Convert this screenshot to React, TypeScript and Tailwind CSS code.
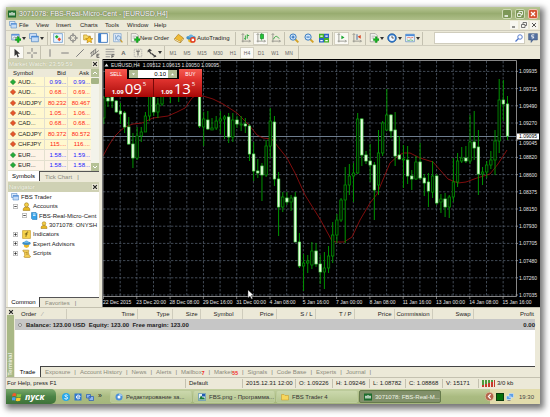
import React from "react";

// [index, high, bodyTop, bodyBottom, low, 1 = bearish (filled)]
const candles = [
  [0, 96, 98, 118, 124, 0],
  [1, 96, 98, 101, 107, 1],
  [2, 96, 97, 101, 108, 1],
  [3, 100, 101, 112, 113, 1],
  [4, 103, 111, 114, 124, 1],
  [5, 111, 113, 127, 133, 1],
  [6, 117, 127, 144, 145, 1],
  [7, 133, 144, 158, 168, 1],
  [8, 127, 136, 158, 160, 0],
  [9, 127, 132, 136, 142, 0],
  [10, 112, 116, 132, 132, 0],
  [11, 90, 94, 116, 121, 0],
  [12, 92, 94, 112, 116, 1],
  [13, 98, 104, 112, 118, 0],
  [14, 92, 95, 104, 106, 0],
  [16, 90, 92, 96, 103, 0],
  [18, 90, 92, 96, 102, 0],
  [23, 90, 92, 126, 128, 1],
  [24, 112, 119, 127, 146, 0],
  [25, 111, 120, 129, 130, 1],
  [26, 118, 128, 130, 130, 0],
  [27, 116, 121, 128, 130, 0],
  [28, 111, 119, 121, 134, 0],
  [29, 115, 117, 119, 139, 0],
  [30, 113, 117, 137, 143, 1],
  [31, 113, 120, 137, 142, 0],
  [32, 116, 120, 124, 128, 1],
  [33, 116, 124, 125, 131, 0],
  [34, 118, 124, 126, 133, 1],
  [35, 124, 126, 154, 161, 1],
  [36, 142, 154, 171, 181, 1],
  [37, 159, 171, 173, 178, 1],
  [38, 163, 166, 175, 201, 1],
  [39, 140, 146, 175, 177, 0],
  [40, 108, 121, 146, 158, 0],
  [41, 116, 122, 179, 186, 1],
  [42, 172, 179, 207, 236, 1],
  [43, 192, 197, 207, 212, 0],
  [44, 192, 198, 202, 205, 1],
  [45, 195, 198, 202, 211, 0],
  [46, 192, 197, 242, 242, 1],
  [47, 233, 242, 266, 268, 1],
  [48, 254, 263, 266, 291, 0],
  [49, 255, 261, 263, 273, 0],
  [50, 242, 251, 265, 269, 0],
  [51, 243, 251, 264, 267, 1],
  [52, 255, 264, 272, 284, 1],
  [53, 252, 268, 272, 289, 0],
  [54, 246, 256, 268, 273, 0],
  [55, 222, 235, 256, 263, 0],
  [56, 214, 220, 235, 243, 0],
  [57, 198, 200, 220, 222, 0],
  [58, 167, 185, 200, 243, 0],
  [59, 164, 176, 185, 195, 0],
  [60, 163, 173, 176, 202, 0],
  [61, 113, 119, 173, 174, 0],
  [62, 118, 119, 155, 166, 1],
  [63, 151, 155, 161, 164, 1],
  [64, 144, 161, 165, 182, 1],
  [65, 162, 165, 190, 220, 1],
  [66, 130, 153, 185, 195, 0],
  [67, 121, 123, 153, 156, 0],
  [68, 89, 115, 130, 131, 0],
  [69, 114, 115, 131, 138, 1],
  [70, 112, 130, 156, 166, 1],
  [71, 136, 155, 159, 160, 1],
  [72, 145, 159, 160, 188, 0],
  [73, 146, 160, 176, 184, 1],
  [74, 170, 176, 179, 190, 1],
  [75, 156, 162, 179, 180, 0],
  [76, 143, 162, 178, 180, 1],
  [77, 174, 178, 183, 196, 1],
  [78, 173, 182, 191, 207, 1],
  [79, 161, 176, 192, 198, 0],
  [80, 174, 176, 203, 205, 1],
  [81, 194, 199, 202, 213, 0],
  [82, 193, 199, 207, 217, 1],
  [83, 195, 197, 207, 218, 0],
  [84, 158, 182, 197, 202, 0],
  [85, 153, 161, 182, 187, 0],
  [86, 147, 158, 161, 163, 0],
  [87, 146, 158, 161, 163, 1],
  [88, 115, 142, 161, 164, 0],
  [89, 111, 142, 148, 160, 1],
  [90, 130, 147, 174, 195, 1],
  [91, 167, 172, 174, 185, 0],
  [92, 161, 165, 172, 178, 0],
  [93, 151, 160, 165, 169, 0],
  [94, 130, 141, 160, 175, 0],
  [95, 79, 100, 141, 153, 0],
  [96, 80, 100, 104, 121, 1],
  [97, 96, 104, 136, 140, 1],
];

const average =
  "103,156 109,145 115,136 120,131 125,127 133,124 142,123 153,118 168,116 177,112 185,108 192,98 197,95 203,96 213,99 223,104 237,113 249,125 257,135 263,138 272,139 279,148 287,158 295,173 300,184 305,195 320,219 332,241 336,242 344,242 352,237 360,220 370,203 377,194 382,182 390,163 398,156 403,153 410,153 420,158 433,162 448,179 458,183 466,182 477,178 490,174 498,164 507,150";

const prices = [
  "1.09935",
  "1.09715",
  "1.09490",
  "1.09270",
  "1.09045",
  "1.08820",
  "1.08600",
  "1.08375",
  "1.08150",
  "1.07930",
  "1.07705",
  "1.07480",
  "1.07260",
  "1.07035",
];

const times = [
  "22 Dec 2015",
  "23 Dec 20:00",
  "28 Dec 08:00",
  "29 Dec 16:00",
  "31 Dec 00:00",
  "4 Jan 08:00",
  "5 Jan 16:00",
  "7 Jan 00:00",
  "8 Jan 08:00",
  "11 Jan 16:00",
  "13 Jan 00:00",
  "14 Jan 08:00",
  "15 Jan 16:00",
];

const quotes = [
  ["AUD...", "0.99...", "0.99...", "up"],
  ["AUD...", "0.68...", "0.69...", "down"],
  ["AUDJPY", "80.232", "80.467", "down"],
  ["AUD...", "1.05...", "1.06...", "down"],
  ["CAD...", "0.68...", "0.68...", "down"],
  ["CADJPY", "80.372", "80.572", "down"],
  ["CHFJPY", "115....", "116....", "down"],
  ["EUR...", "1.58...", "1.59...", "up"],
  ["EUR...", "1.58...", "1.58...", "up"],
];

const Svg = ({ children, className = "size-[10px]" }: any) => (
  <svg viewBox="0 0 16 16" className={className + " shrink-0"} fill="none" aria-hidden="true">
    {children}
  </svg>
);

const Plus = () => (
  <path d="M10 6h3v3h3v3h-3v3h-3v-3H7V9h3z" fill="#12b71c" stroke="#0a7a12" strokeWidth=".6" />
);

const Axes = () => <path d="M3 1v14M1 13h14M1 3l2-2 2 2M13 11l2 2-2 2" stroke="#8c8c84" strokeWidth="1.3" />;

const Person = () => (
  <>
    <path d="M2 15c0-5 2-6 6-6s6 1 6 6z" fill="#e8b820" stroke="#9a7410" />
    <circle cx="8" cy="5" r="3.6" fill="#f4cf48" stroke="#9a7410" />
  </>
);

const Hat = () => (
  <>
    <path d="M3 9h10l-1 5-4 2-4-2z" fill="#e9b92c" />
    <ellipse cx="8" cy="7.5" rx="7.5" ry="3" fill="#3d8ec9" />
    <path d="M4 7c0-6 8-6 8 0z" fill="#67b2e4" />
  </>
);

const icons: Record<string, React.ReactNode> = {
  newChart: (
    <>
      <path d="M1 2h12v9H1z" fill="#e6eefb" stroke="#4a78b8" />
      <path d="M1 2h12v2H1z" fill="#4a86d8" />
      <path d="M3 9l3-3 2 2 3-3" stroke="#666" />
      <Plus />
    </>
  ),
  profiles: (
    <>
      <path d="M1 1h11v8H1z" fill="#dbe9fb" stroke="#3e78bd" />
      <path d="M4 5h11v9H4z" fill="#c5dcf7" stroke="#3e78bd" />
      <path d="M4 5h11v2H4z" fill="#3f83d5" />
    </>
  ),
  watch: (
    <>
      <path d="M1 1h14v14H1z" fill="#eaf3fd" stroke="#4584c8" />
      <path d="M3 6l3-3 3 3-3 3z" fill="#1fae38" />
      <path d="M7 10l3-3 3 3-3 3z" fill="#ea4a26" />
    </>
  ),
  target: (
    <>
      <circle cx="8" cy="8" r="5" stroke="#777" strokeWidth="1.4" />
      <path d="M8 0v6M8 10v6M0 8h6M10 8h6" stroke="#777" strokeWidth="1.4" />
    </>
  ),
  star: (
    <>
      <path d="M1 3h5l1 2h5v6H1z" fill="#f6d965" stroke="#ba8b18" />
      <path d="M10 5l1.8 3.6 4 .4-3 2.6 1 4-3.8-2-3.6 2 .8-4-3-2.6 4-.4z" fill="#ffc928" stroke="#b07c0c" />
    </>
  ),
  panel: (
    <>
      <path d="M1 1h14v14H1z" fill="#fff" stroke="#4079bd" strokeWidth="1.5" />
      <path d="M1 1h4v14H1z" fill="#3b7fd0" />
    </>
  ),
  tester: (
    <>
      <path d="M1 1h12v13H1z" fill="#e5eefa" stroke="#6c96c8" />
      <path d="M4 3v9M8 3v7" stroke="#6c96c8" />
      <circle cx="9" cy="8" r="3.5" fill="#cfe3f8" stroke="#4b7db6" />
      <path d="M11.5 10.5L15 15" stroke="#c99b2a" strokeWidth="2" />
    </>
  ),
  order: (
    <>
      <path d="M2 1h8l3 3v10H2z" fill="#fbfbf6" stroke="#888" />
      <path d="M4 5h6M4 8h4" stroke="#888" />
      <Plus />
    </>
  ),
  book: (
    <>
      <path d="M1 9l6-7 8 6-5 6z" fill="#f0bb35" stroke="#a77712" />
      <path d="M1 9v2l9 5v-2M10 16l5-6V8" fill="#fff4c8" stroke="#a77712" />
    </>
  ),
  auto: (
    <>
      <Hat />
      <circle cx="11" cy="11" r="4.5" fill="#e03a1e" />
      <path d="M9 9h4v4H9z" fill="#fff" />
    </>
  ),
  bars: (
    <>
      <Axes />
      <path d="M7 4v7M5 9h2M10 2v7M10 4h3" stroke="#23a535" strokeWidth="1.4" />
    </>
  ),
  candle: (
    <>
      <Axes />
      <path d="M9 0v12" stroke="#138c22" />
      <path d="M7 2h5v7H7z" fill="#20c536" stroke="#0e7d1b" />
    </>
  ),
  line: (
    <>
      <Axes />
      <path d="M4 10c3-7 6-5 9-1" stroke="#27a238" strokeWidth="1.4" />
    </>
  ),
  zoomIn: (
    <>
      <path d="M10 10l5 5" stroke="#d3a228" strokeWidth="3" />
      <circle cx="6.5" cy="6.5" r="5" fill="#cfe6fb" stroke="#3577bd" strokeWidth="1.5" />
      <path d="M4 6.5h5M6.5 4v5" stroke="#1e62b4" strokeWidth="1.5" />
    </>
  ),
  zoomOut: (
    <>
      <path d="M10 10l5 5" stroke="#d3a228" strokeWidth="3" />
      <circle cx="6.5" cy="6.5" r="5" fill="#cfe6fb" stroke="#3577bd" strokeWidth="1.5" />
      <path d="M4 6.5h5" stroke="#1e62b4" strokeWidth="1.5" />
    </>
  ),
  tile: (
    <>
      <path d="M0 1h8v7H0zM8 8h8v7H8z" fill="#43b02a" />
      <path d="M8 1h8v7H8zM0 8h8v7H0z" fill="#2d66c4" />
      <path d="M2 4h4v2H2zM10 4h4v2h-4zM2 11h4v2H2zM10 11h4v2h-4z" fill="#fff" />
    </>
  ),
  scroll: (
    <>
      <Axes />
      <path d="M7 4l5 3-5 3z" fill="#1ca632" />
    </>
  ),
  shift: (
    <>
      <Axes />
      <path d="M8 2v9" stroke="#3f6ca8" strokeWidth="1.5" />
      <path d="M14 3v6L9 6z" fill="#d84524" />
    </>
  ),
  clock: (
    <>
      <circle cx="8" cy="8" r="7" fill="#2e78cb" stroke="#1c5598" />
      <circle cx="8" cy="8" r="4.6" fill="#f2f8ff" />
      <path d="M8 4.5V8h3" stroke="#333" strokeWidth="1.2" />
    </>
  ),
  template: (
    <>
      <path d="M1 2h14v12H1z" fill="#f2f6fb" stroke="#4b7fbe" />
      <path d="M1 2h14v3H1z" fill="#4b8cd8" />
      <path d="M3 8l3-1 3 1 4-1" stroke="#d3452a" />
      <path d="M3 11l3 1 3-1 4 1" stroke="#2b9c3b" />
    </>
  ),
  cursor: <path d="M4 1v12l3-3 2 5 2-1-2-5h4z" fill="#333" />,
  cross: <path d="M8 0v6M8 10v6M0 8h6M10 8h6" stroke="#777" strokeWidth="1.5" />,
  vline: <path d="M8 2v12" stroke="#777" strokeWidth="1.5" />,
  hline: <path d="M2 8h12" stroke="#777" strokeWidth="1.5" />,
  trend: <path d="M2 14L14 2" stroke="#777" strokeWidth="1.5" />,
  channel: (
    <>
      <path d="M0 9l10-8M1 14L14 4M3 6v7M6 4v7M9 2v7" stroke="#666" strokeWidth="1.2" />
      <path d="M15 10h-4v5h4M11 12.5h3" stroke="#444" strokeWidth="1.2" />
    </>
  ),
  fibo: (
    <>
      <path d="M1 2h14M1 6h14M1 10h14M1 14h7" stroke="#888" strokeWidth="1.3" />
      <path d="M11 16v-5h4M11 13.5h3" stroke="#444" strokeWidth="1.2" />
    </>
  ),
  label: (
    <>
      <path d="M2 2h12v12H2z" stroke="#999" strokeDasharray="2 1" />
      <path d="M5 5h6M8 5v7" stroke="#555" strokeWidth="1.5" />
    </>
  ),
  arrows: (
    <>
      <path d="M1 4l3-3 4 3-3 1 3 4-2 1-3-4-2 1z" fill="#444" />
      <path d="M15 14l-5 1 1-2-4-3 1-2 5 4 1-1z" fill="#444" />
    </>
  ),
  mail: (
    <>
      <path d="M1 1h14v10H8l-3 4v-4H1z" fill="#55719f" stroke="#405a86" />
      <path d="M10 3H6v3h3v2H6" stroke="#fff" strokeWidth="1.3" />
    </>
  ),
  globe: (
    <>
      <circle cx="8" cy="8" r="7" fill="#4c90d8" />
      <circle cx="8" cy="8" r="3" fill="#fff" />
      <path d="M8 1c4 0 6 2 7 5H8" fill="#9cc7ef" />
    </>
  ),
  photo: (
    <>
      <path d="M1 1h14v14H1z" fill="#e7f2fa" stroke="#266ca1" />
      <path d="M2 13l4-8 4 5 2-2 2 5z" fill="#187b38" />
      <path d="M8 2h6v5H8z" fill="#225bb4" />
    </>
  ),
  folder: <path d="M1 3h5l2 2h7v9H1z" fill="#f7d65b" stroke="#c59524" />,
  terminal: (
    <>
      <path d="M0 1h16v14H0z" fill="#1d6c2d" />
      <path d="M3 11V6h2v5M7 11V5h2v6M11 11V6h2v5" stroke="#fff" strokeWidth="1.3" />
    </>
  ),
};

const Tool = ({ name, label, on, caret }: { name: string; label: string; on?: boolean; caret?: boolean }) => (
  <button
    type="button"
    aria-label={label}
    className={
      "flex h-[13px] items-center justify-center " +
      (caret ? "w-[18px] gap-px " : "w-[15px] ") +
      (on ? "border border-[#d3d0c0] bg-[#faf9f4]" : "")
    }
  >
    <Svg>{icons[name]}</Svg>
    {caret && (
      <svg viewBox="0 0 4 3" className="w-[4px]" aria-hidden="true">
        <path d="M0 0h4L2 3z" fill="#333" />
      </svg>
    )}
  </button>
);

const Sep = ({ tight }: { tight?: boolean }) => (
  <span className={"h-[13px] w-px shrink-0 bg-[#c4c1b0] " + (tight ? "mx-px" : "mx-[2px]")} />
);

const Bar = () => <span className="text-[#777]">|</span>;

const TitleBar = () => (
  <header className="flex h-[13px] items-center gap-[3px] bg-linear-to-b from-[#b9c795] via-[#98ac70] to-[#afbf89] pr-[2px] pl-[2px] text-white">
    <Svg className="size-[8px]">{icons.terminal}</Svg>
    <h1 className="flex-1 text-[7px] leading-[12px] [text-shadow:0_0_1px_#444]">3071078: FBS-Real-Micro-Cent - [EURUSD,H4]</h1>
    <button type="button" aria-label="Minimize" className="size-[10px] rounded-[2px] border border-[#d0dbb7] bg-[#7d9757]">
      <Svg className="size-[8px]"><path d="M3 12h7" stroke="#fff" strokeWidth="3" /></Svg>
    </button>
    <button type="button" aria-label="Restore" className="size-[10px] rounded-[2px] border border-[#d0dbb7] bg-[#7d9757]">
      <Svg className="size-[8px]"><path d="M6 7V3h7v6h-3M3 7h7v6H3z" stroke="#fff" strokeWidth="1.6" /></Svg>
    </button>
    <button type="button" aria-label="Close" className="size-[10px] rounded-[2px] border border-[#eec5b4] bg-[#d55332]">
      <Svg className="size-[8px]"><path d="M4 4l8 8M12 4l-8 8" stroke="#fff" strokeWidth="2.5" /></Svg>
    </button>
  </header>
);

const MenuBar = () => (
  <nav className="flex h-[10px] items-center pr-[2px] pl-[3px]">
    <Svg className="mr-[2px] size-[8px]">{icons.profiles}</Svg>
    <button type="button" className="w-[17px] text-left">File</button>
    <button type="button" className="w-[20px] text-left">View</button>
    <button type="button" className="w-[24px] text-left">Insert</button>
    <button type="button" className="w-[25px] text-left">Charts</button>
    <button type="button" className="w-[22px] text-left">Tools</button>
    <button type="button" className="w-[27px] text-left">Window</button>
    <button type="button">Help</button>
    <span className="flex-1" />
    <span className="flex gap-[2px]">
      <button type="button" aria-label="Minimize chart" className="bg-[#f7f6f0]">
        <Svg className="size-[8px]"><path d="M4 12h6" stroke="#555" strokeWidth="2.5" /></Svg>
      </button>
      <button type="button" aria-label="Restore chart" className="bg-[#f7f6f0]">
        <Svg className="size-[8px]"><path d="M6 7V3h7v6h-3M3 7h7v6H3z" stroke="#555" strokeWidth="1.6" /></Svg>
      </button>
      <button type="button" aria-label="Close chart" className="bg-[#f7f6f0]">
        <Svg className="size-[8px]"><path d="M4 4l8 8M12 4l-8 8" stroke="#555" strokeWidth="2" /></Svg>
      </button>
    </span>
  </nav>
);

const Toolbars = () => (
  <>
    <div className="flex h-[15px] items-center border-t border-[#d0cdbd] pl-[3px]">
      <Tool name="newChart" label="New chart" caret />
      <Tool name="profiles" label="Profiles" caret />
      <Sep />
      <Tool name="watch" label="Market Watch" on />
      <Tool name="target" label="Data Window" />
      <Tool name="star" label="Navigator" on />
      <Tool name="panel" label="Terminal" on />
      <Tool name="tester" label="Strategy Tester" />
      <Sep />
      <button type="button" className="flex w-[41px] items-center whitespace-nowrap">
        <Svg>{icons.order}</Svg>New Order
      </button>
      <Tool name="book" label="MetaEditor" />
      <button type="button" className="flex w-[47px] items-center gap-px whitespace-nowrap">
        <Svg>{icons.auto}</Svg>AutoTrading
      </button>
      <Sep />
      <Tool name="bars" label="Bar chart" />
      <Tool name="candle" label="Candlesticks" on />
      <Tool name="line" label="Line chart" />
      <Sep tight />
      <Tool name="zoomIn" label="Zoom in" />
      <Tool name="zoomOut" label="Zoom out" />
      <Tool name="tile" label="Tile windows" />
      <Sep tight />
      <Tool name="scroll" label="Auto scroll" on />
      <Tool name="shift" label="Chart shift" />
      <Sep tight />
      <Tool name="order" label="Indicators" caret />
      <Tool name="clock" label="Periods" caret />
      <Tool name="template" label="Templates" caret />
      <Sep tight />
      <span className="flex-1" />
      <label className="flex h-[12px] w-[91px] items-center border border-[#d0cdbd] bg-white pr-px">
        <input aria-label="Search" className="w-0 min-w-0 flex-1 outline-none" />
        <Svg className="size-[8px]">
          <circle cx="10" cy="6" r="4.5" stroke="#4c74c8" strokeWidth="1.8" />
          <path d="M7 9l-6 6" stroke="#4c74c8" strokeWidth="2.5" />
        </Svg>
      </label>
      <Tool name="mail" label="Chat" />
    </div>
    <div className="flex h-[14px] items-center border-t border-[#d0cdbd] pl-[3px] text-[#666]">
      <Tool name="cursor" label="Cursor" on />
      <Tool name="cross" label="Crosshair" />
      <Sep tight />
      <Tool name="vline" label="Vertical line" />
      <Tool name="hline" label="Horizontal line" />
      <Tool name="trend" label="Trendline" />
      <Tool name="channel" label="Channel" />
      <Tool name="fibo" label="Fibonacci" />
      <button type="button" className="w-[13px] font-bold">A</button>
      <Tool name="label" label="Text label" />
      <Tool name="arrows" label="Arrows" caret />
      <Sep tight />
      {["M1", "M5", "M15", "M30", "H1", "H4", "D1", "W1", "MN"].map((p) => (
        <button
          key={p}
          type="button"
          className={
            "h-[12px] text-[5px] " +
            (p.length > 2 ? "w-[16px] " : "w-[14px] ") +
            (p === "H4" ? "border border-[#d3d0c0] bg-[#faf9f4]" : "")
          }
        >
          {p}
        </button>
      ))}
      <Sep />
    </div>
  </>
);

const PaneTitle = ({ children }: any) => (
  <div className="flex h-[10px] items-center justify-between bg-[#cfd1b4] pr-px pl-px">
    <h2 className="text-[#f7f7ee] [text-shadow:0_0_1px_#a3a67f]">{children}</h2>
    <button type="button" aria-label="Close pane" className="bg-[#ece9d8]">
      <Svg className="size-[6px]"><path d="M3 3l10 10M13 3L3 13" stroke="#222" strokeWidth="3" /></Svg>
    </button>
  </div>
);

const PaneTabs = ({ first, second }: { first: string; second: string }) => (
  <div className="flex h-[10px] items-center border-t border-[#555] text-[#8b897c]">
    <button type="button" className="-mt-px h-[10px] w-[32px] border-r border-[#444] bg-white text-black">{first}</button>
    <button type="button" className="px-[5px]">{second}</button>
    <Bar />
  </div>
);

const MarketWatch = () => (
  <section className="bg-[#ece9d8]">
    <PaneTitle>Market Watch: 23:59:59</PaneTitle>
    <div className="flex bg-white">
      <table className="h-[102px] flex-1 table-fixed border-collapse">
        <thead>
          <tr className="bg-[#ece9d8]">
            <th className="w-[36px] pl-[5px] text-left font-normal">Symbol</th>
            <th className="pr-[2px] text-right font-normal">Bid</th>
            <th className="pr-[2px] text-right font-normal">Ask</th>
          </tr>
        </thead>
        <tbody>
          {quotes.map(([symbol, bid, ask, dir], i) => (
            <tr key={i} className={"border-b border-[#e3e0cf] " + (i < 7 ? "bg-[#fff8cf]" : "bg-[#fdf3e6]")}>
              <td className="border-r border-[#e3e0cf] p-0">
                <span className="flex items-center gap-[2px] pl-[2px]">
                  <Svg className="size-[6px]">
                    <path d="M8 1l7 7-7 7-7-7z" fill={dir === "up" ? "#23ad38" : "#e7562b"} stroke={dir === "up" ? "#127322" : "#a83211"} strokeWidth="1.5" />
                  </Svg>
                  {symbol}
                </span>
              </td>
              <td className={"border-r border-[#e3e0cf] p-0 pr-px text-right " + (dir === "up" ? "text-[#2020ff]" : "text-[#ff2010]")}>{bid}</td>
              <td className={"p-0 pr-px text-right " + (dir === "up" ? "text-[#2020ff]" : "text-[#ff2010]")}>{ask}</td>
            </tr>
          ))}
        </tbody>
      </table>
      <div className="flex w-[8px] flex-col items-center justify-between bg-[#f3f3ea]">
        <div className="w-full">
          <Svg className="h-[8px] w-full bg-[#b5c196]"><path d="M4 10l4-4 4 4" stroke="#fff" strokeWidth="2" /></Svg>
          <div className="mt-px h-[6px] rounded-[1px] bg-[#a5b485]" />
        </div>
        <Svg className="h-[8px] w-full bg-[#b5c196]"><path d="M4 6l4 4 4-4" stroke="#fff" strokeWidth="2" /></Svg>
      </div>
    </div>
    <PaneTabs first="Symbols" second="Tick Chart" />
  </section>
);

const Box = ({ open }: { open?: boolean }) => (
  <Svg className="mr-[2px] size-[5px]">
    <path d="M1 1h14v14H1z" fill="#fff" stroke="#888" strokeWidth="2" />
    <path d={open ? "M4 8h8" : "M4 8h8M8 4v8"} stroke="#222" strokeWidth="2.5" />
  </Svg>
);

const Navigator = () => (
  <section className="mt-px flex flex-1 flex-col bg-[#ece9d8]">
    <PaneTitle>Navigator</PaneTitle>
    <div className="flex-1 bg-white">
      <ul className="grid h-[66px] grid-rows-7 whitespace-nowrap [&>li]:flex [&>li]:items-center">
        <li className="gap-[2px] pl-[3px]"><Svg className="size-[8px]">{icons.profiles}</Svg>FBS Trader</li>
        <li className="gap-[2px] pl-[5px]"><Box open /><Svg className="size-[9px]"><Person /></Svg>Accounts</li>
        <li className="gap-px pl-[14px]">
          <Box open />
          <Svg className="size-[8px]"><path d="M3 1h9l2 2v12H5l-2-2z" fill="#39a3e8" stroke="#1669a8" /><path d="M6 4h5M6 7h5" stroke="#fff" strokeWidth="1.5" /></Svg>
          FBS-Real-Micro-Cent
        </li>
        <li className="gap-px pl-[32px]"><Svg className="size-[8px]"><Person /></Svg>3071078: ONYSH</li>
        <li className="gap-[2px] pl-[5px]">
          <Box />
          <Svg className="size-[9px]"><path d="M1 1h14v14H1z" fill="#f7d34d" stroke="#b98b16" /><path d="M11 4c-3-1-3 1-4 8M5 7h5" stroke="#4b3a0a" strokeWidth="1.3" /></Svg>
          Indicators
        </li>
        <li className="gap-[2px] pl-[5px]"><Box /><Svg className="size-[9px]"><Hat /></Svg>Expert Advisors</li>
        <li className="gap-[2px] pl-[5px]">
          <Box />
          <Svg className="size-[9px]"><path d="M2 2h9c2 0 2 3 0 3l2 7c3 0 3 3 0 3H5c-2 0-2-3 0-3L4 5C1 5 1 2 2 2z" fill="#f5cf57" stroke="#a97d15" /><path d="M6 6h4M7 9h4" stroke="#8a650d" /></Svg>
          Scripts
        </li>
      </ul>
    </div>
    <PaneTabs first="Common" second="Favorites" />
  </section>
);

const Chart = () => (
  <svg viewBox="102 59 438 248" className="block w-full bg-black" role="img" aria-label="EURUSD,H4" fontFamily="Liberation Sans, sans-serif" fontSize="5">
    <g stroke="#5b6878" strokeWidth="0.7" strokeDasharray="2.4 1.6">
      {prices.map((p, i) => (
        <path key={p} d={`M103 ${71.4 + i * 17.2}H516`} />
      ))}
      {Array.from({ length: 24 }, (_, i) => (
        <path key={i} d={`M${120.2 + i * 16.65} 61V296`} />
      ))}
    </g>
    <path d="M103 136.5H516" stroke="#6d7c8d" strokeWidth="1" />
    <polyline points={average} fill="none" stroke="#a01010" strokeWidth="0.8" />
    {candles.map(([i, high, top, bottom, low, down]) => {
      const x = 103.8 + i * 4.162;
      return (
        <g key={i}>
          <path d={`M${x} ${high}V${low}`} stroke="#009400" strokeWidth="1" />
          <rect
            x={x - 1.2}
            y={top}
            width={2.4}
            height={Math.max(bottom - top, 1)}
            fill={down ? "#e8ffe0" : "#001800"}
            stroke={down ? "#5fe05f" : "#009c00"}
            strokeWidth="0.7"
          />
        </g>
      );
    })}
    <path d="M103 60.5H516.5V296.5H103z" fill="none" stroke="#a8a8a8" strokeWidth="0.8" />
    <path d="M102.5 59V307" stroke="#777" strokeWidth="1" />
    <g fill="#e4e4e4">
      {prices.map((p, i) => (
        <React.Fragment key={p}>
          <path d={`M516 ${71.4 + i * 17.2}h2`} stroke="#a8a8a8" strokeWidth="0.7" />
          {/* the level next to the bid tag is pushed down so both stay readable */}
          <text x="519" y={p === "1.09045" ? 145 : 73.3 + i * 17.2}>{p}</text>
        </React.Fragment>
      ))}
      {times.map((t, i) => (
        <React.Fragment key={t}>
          <path d={`M${103.5 + i * 33.3} 296v3`} stroke="#a8a8a8" strokeWidth="0.7" />
          <text x={103 + i * 33.3} y="303.5">{t}</text>
        </React.Fragment>
      ))}
      <path d="M104.5 66.5h4l-2-3z" />
      <text x="111" y="67">EURUSD,H4&nbsp; 1.09512 1.09615 1.09050 1.09095</text>
    </g>
    <rect x="517" y="133.5" width="22" height="6" fill="#fff" />
    <text x="519" y="138.3" fill="#000">1.09095</text>
    <path d="M248 290v8l2-2 1.5 3 1.2-.6-1.5-3h2.6z" fill="#fff" stroke="#333" strokeWidth="0.4" />
  </svg>
);

const OneClick = () => (
  <div className="absolute top-[10px] left-[3px] flex w-[97px] flex-col text-white">
    <div className="flex h-[10px]">
      <button type="button" className="w-[22px] bg-linear-to-b from-[#f55a50] to-[#e23430] text-[5px]">SELL</button>
      <div className="flex flex-1 items-center bg-black px-[2px]">
        <button type="button" aria-label="Decrease volume" className="h-[8px] w-[9px] bg-[#b1bd94]">
          <Svg className="h-[6px] w-full"><path d="M4 6h8l-4 5z" fill="#fff" /></Svg>
        </button>
        <input aria-label="Volume" defaultValue="0.10" className="h-[8px] w-0 min-w-0 flex-1 bg-white pr-[2px] text-right text-black" />
        <button type="button" aria-label="Increase volume" className="h-[8px] w-[9px] bg-[#b1bd94]">
          <Svg className="h-[6px] w-full"><path d="M4 11h8L8 6z" fill="#fff" /></Svg>
        </button>
      </div>
      <button type="button" className="w-[23px] bg-linear-to-b from-[#f55a50] to-[#e23430] text-[5px]">BUY</button>
    </div>
    <div className="flex h-[18px] gap-px bg-[#780808]">
      {["09", "13"].map((n) => (
        <div key={n} className="flex flex-1 items-end justify-center bg-linear-to-b from-[#e23430] to-[#a80404] font-[Open_Sans]">
          <span className="text-[6px] leading-[10px] font-bold">1.09</span>
          <span className="mx-px text-[15px] leading-[17px]">{n}</span>
          <sup className="top-0 self-start text-[6px] leading-[10px]">5</sup>
        </div>
      ))}
    </div>
  </div>
);

const th = "border-r border-[#cfccbc] p-0 pr-[2px] text-right font-normal";

const Terminal = () => (
  <section className="flex h-[70px] border-t border-[#c4c1b0] pt-px pr-[5px] pl-px">
    <div className="flex w-[7px] flex-col items-center bg-[#a9b886]">
      <button type="button" aria-label="Close terminal" className="w-full bg-[#ece9d8]">
        <Svg className="m-auto size-[6px]"><path d="M3 3l10 10M13 3L3 13" stroke="#222" strokeWidth="3" /></Svg>
      </button>
      <h2 className="mt-auto rotate-180 pt-px leading-[7px] text-white [writing-mode:vertical-rl]">Terminal</h2>
    </div>
    <div className="ml-px flex min-w-0 flex-1 flex-col">
      <div className="flex-1 bg-white">
        <table className="w-full table-fixed border-collapse">
          <thead>
            <tr className="h-[10px] bg-[#ece9d8]">
              <th className="w-[51px] border-r border-[#cfccbc] p-0 pl-[6px] text-left font-normal">
                Order <span className="ml-[4px] text-[#999]">∕</span>
              </th>
              <th className={th + " w-[71px]"}>Time</th>
              <th className={th + " w-[35px]"}>Type</th>
              <th className={th + " w-[28px]"}>Size</th>
              <th className={th + " w-[42px] pr-[8px]"}>Symbol</th>
              <th className={th + " w-[34px]"}>Price</th>
              <th className={th + " w-[39px]"}>S / L</th>
              <th className={th + " w-[39px]"}>T / P</th>
              <th className={th + " w-[40px]"}>Price</th>
              <th className={th + " w-[38px]"}>Commission</th>
              <th className={th + " w-[41px]"}>Swap</th>
              <th className="p-0 pr-px text-right font-normal">Profit</th>
            </tr>
          </thead>
          <tbody>
            <tr className="h-[11px] bg-[#c6c6c6] font-bold">
              <td colSpan={11} className="p-0 pl-[3px]">
                <span className="mr-[4px] inline-block size-[4px] rounded-full border border-[#888] bg-[#eee]" />
                Balance: 123.00 USD&nbsp; Equity: 123.00&nbsp; Free margin: 123.00
              </td>
              <td className="p-0 text-right">0.00</td>
            </tr>
          </tbody>
        </table>
      </div>
      <div className="flex h-[11px] items-center gap-[4px] border-t border-[#444] whitespace-nowrap text-[#8b897c]">
        <button type="button" className="-mt-px h-[11px] w-[26px] border-r border-[#444] bg-white text-black">Trade</button>
        <button type="button">Exposure</button><Bar />
        <button type="button">Account History</button><Bar />
        <button type="button">News</button><Bar />
        <button type="button">Alerts</button><Bar />
        <button type="button">Mailbox<sub className="text-[5px] font-bold text-[#f02020]">7</sub></button><Bar />
        <button type="button">Market<sub className="text-[5px] font-bold text-[#f02020]">55</sub></button><Bar />
        <button type="button">Signals</button><Bar />
        <button type="button">Code Base</button><Bar />
        <button type="button">Experts</button><Bar />
        <button type="button">Journal</button><Bar />
      </div>
    </div>
  </section>
);

const cell = "border-l border-[#c4c1b0] pl-[3px]";

const StatusBar = () => (
  <footer className="flex h-[12px] items-center border-t border-[#c4c1b0] pl-px leading-[9px] whitespace-nowrap">
    <span className="w-[178px]">For Help, press F1</span>
    <span className={cell + " w-[57px]"}>Default</span>
    <span className={cell + " w-[53px]"}>2015.12.31 12:00</span>
    <span className={cell + " w-[37px]"}>O: 1.09226</span>
    <span className={cell + " w-[37px]"}>H: 1.09246</span>
    <span className={cell + " w-[36px]"}>L: 1.08782</span>
    <span className={cell + " w-[37px]"}>C: 1.08868</span>
    <span className={cell + " w-[36px]"}>V: 15171</span>
    <span className={cell + " flex items-center gap-[2px]"}>
      <svg viewBox="0 0 13 7" className="w-[13px]" aria-hidden="true">
        <path d="M0 0h2v5H0zM3 0h2v4H3zM6 0h2v3H6zM9 0h2v2H9z" fill="#4d9a3a" />
        <path d="M0 5h2v2H0zM3 4h2v3H3zM6 3h2v4H6zM9 2h2v5H9zM12 0h1v7h-1z" fill="#c63a2c" />
      </svg>
      3/0 kb
    </span>
  </footer>
);

const Task = ({ name, children, on }: any) => (
  <button
    type="button"
    className={
      "flex h-[13px] w-[82px] items-center gap-[3px] rounded-[2px] border pl-[4px] whitespace-nowrap " +
      (on ? "border-[#667a4c] bg-[#81906a] text-[#eef2e3]" : "border-[#bccb9b] bg-linear-to-b from-[#cbd8ac] to-[#b5c691] text-[#333]")
    }
  >
    <Svg className="size-[8px]">{icons[name]}</Svg>
    {children}
  </button>
);

const Taskbar = () => (
  <nav className="flex h-[15px] items-center gap-px bg-linear-to-b from-[#c3d09f] via-[#aabb81] to-[#a5b67d]">
    <button type="button" className="flex h-full w-[50px] items-center gap-[3px] rounded-r-[5px] bg-linear-to-b from-[#79a86c] via-[#4c8446] to-[#3e7239] pl-[6px] font-[Open_Sans] text-[9px] font-bold text-white italic">
      <Svg>
        <path d="M1 3c2-2 4-2 6 0L6 7C4 6 3 6 0 7z" fill="#ef5a2a" />
        <path d="M8 3c2 1 4 1 7 0l-1 5c-3 1-5 1-7 0z" fill="#8bc53f" />
        <path d="M0 9c2-1 4-1 6 0l-1 5c-2-1-4-1-6 0z" fill="#4aa0ee" />
        <path d="M7 9c2 1 4 1 7 0l-1 5c-3 1-5 1-7 0z" fill="#fbc92f" />
      </Svg>
      пуск
    </button>
    <div className="flex w-[52px] items-center gap-[4px] pl-[5px]">
      <Svg className="size-[8px]"><circle cx="8" cy="8" r="8" fill="#28a8ea" /><path d="M11 5c-2-2-6-1-5 1s5 1 5 4-5 3-6 0" stroke="#fff" strokeWidth="2" /></Svg>
      <Svg className="size-[8px]"><path d="M1 1h14v14H1z" fill="#2f78cf" /><path d="M4 8h8c0-5-7-5-7 0s5 4 7 2" stroke="#fff" strokeWidth="2" /></Svg>
      <Svg className="size-[8px]"><path d="M1 3h8v7H1zM6 7h9v8H6z" fill="#8fb6ee" stroke="#2f5fb0" strokeWidth="1.5" /></Svg>
      <span className="self-start text-[7px] leading-[6px]">»</span>
    </div>
    <Task name="globe">Редактирование за...</Task>
    <Task name="photo">FBS.png - Программа...</Task>
    <Task name="folder">FBS Trader 4</Task>
    <Task name="terminal" on>3071078: FBS-Real-M...</Task>
    <div className="ml-auto flex h-full w-[50px] items-center gap-[2px] bg-[#e2dcac] text-[#444]">
      <button type="button" aria-label="Show hidden icons" className="-ml-[5px]">
        <Svg className="block size-[9px]"><circle cx="8" cy="8" r="7.5" fill="#b4654a" stroke="#e9d2b8" /><path d="M10 4L6 8l4 4" stroke="#fff" strokeWidth="2" /></Svg>
      </button>
      <span className="size-[8px] border border-[#0a3a0c] bg-[#047008]" />
      <Svg className="size-[8px]"><path d="M6 1h9v8H6zM1 6h9v7H1z" fill="#5da0e8" stroke="#e2effb" /><path d="M3 15h6" stroke="#446" /></Svg>
      <time className="ml-[3px]">19:30</time>
    </div>
  </nav>
);

const App = () => {
  return (
    <div className="min-h-screen bg-white pt-[7px] pr-[10px] pb-[11px] pl-[6px] font-['Liberation_Sans',Arial,sans-serif] text-[6px] leading-[8px] text-[#222]">
      <div className="bg-[#ece9d8] shadow-[2px_3px_6px_2px_#777]">
        <TitleBar />
        <MenuBar />
        <Toolbars />
        <main className="flex">
          <aside className="flex w-[96px] shrink-0 flex-col pr-[3px] pl-[2px]">
            <MarketWatch />
            <Navigator />
          </aside>
          <div className="relative min-w-0 flex-1">
            <Chart />
            <OneClick />
          </div>
        </main>
        <Terminal />
        <StatusBar />
        <Taskbar />
      </div>
    </div>
  );
};

export default App;
